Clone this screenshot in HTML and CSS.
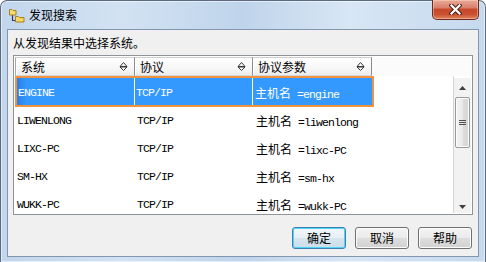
FILE: index.html
```html
<!DOCTYPE html>
<html lang="zh">
<head>
<meta charset="utf-8">
<title>发现搜索</title>
<link rel="stylesheet" href="styles.css">
</head>
<body>
<div class="window">
  <div class="titlebar">
    <svg class="app-icon" width="16" height="15" viewBox="0 0 16 15">
      <path d="M3.5 6.5v6h3.5" stroke="#2c3a6e" stroke-width="1.2" fill="none"/>
      <path d="M0.5 1.5h2.5l1 1h3v4.5h-6.5z" fill="#f6dc6c" stroke="#a8811c"/>
      <path d="M6.5 8.5h3l1 1h4.5v4.5h-8.5z" fill="#f8d865" stroke="#a8811c"/>
    </svg>
    <span class="title">发现搜索</span>
    <div class="close">
      <svg width="13" height="11" viewBox="0 0 13 11">
        <path d="M2.5 1.5l8 8M10.5 1.5l-8 8" stroke="#4b2018" stroke-width="4.2" stroke-linecap="square"/>
        <path d="M2.5 1.5l8 8M10.5 1.5l-8 8" stroke="#ffffff" stroke-width="2.2" stroke-linecap="square"/>
      </svg>
    </div>
  </div>
  <div class="client">
    <div class="prompt">从发现结果中选择系统。</div>
    <div class="listbox">
      <div class="header">
        <div class="hcell c1"><span>系统</span><svg class="sort" width="9" height="11" viewBox="0 0 9 11"><path d="M1 5.5L4.5 1.5 8 5.5zM1 6L4.5 9.5 8 6z" fill="none" stroke="#3a3a3a" stroke-linejoin="round"/></svg></div>
        <div class="hcell c2"><span>协议</span><svg class="sort" width="9" height="11" viewBox="0 0 9 11"><path d="M1 5.5L4.5 1.5 8 5.5zM1 6L4.5 9.5 8 6z" fill="none" stroke="#3a3a3a" stroke-linejoin="round"/></svg></div>
        <div class="hcell c3"><span>协议参数</span><svg class="sort" width="9" height="11" viewBox="0 0 9 11"><path d="M1 5.5L4.5 1.5 8 5.5zM1 6L4.5 9.5 8 6z" fill="none" stroke="#3a3a3a" stroke-linejoin="round"/></svg></div>
        <div class="hfill"></div>
      </div>
      <div class="body">
        <div class="viewport">
          <div class="row sel">
            <div class="cell c1">ENGINE</div>
            <div class="cell c2">TCP/IP</div>
            <div class="cell c3"><span class="zh">主机名</span> =engine</div>
          </div>
          <div class="row">
            <div class="cell c1">LIWENLONG</div>
            <div class="cell c2">TCP/IP</div>
            <div class="cell c3"><span class="zh">主机名</span> =liwenlong</div>
          </div>
          <div class="row">
            <div class="cell c1">LIXC-PC</div>
            <div class="cell c2">TCP/IP</div>
            <div class="cell c3"><span class="zh">主机名</span> =lixc-PC</div>
          </div>
          <div class="row">
            <div class="cell c1">SM-HX</div>
            <div class="cell c2">TCP/IP</div>
            <div class="cell c3"><span class="zh">主机名</span> =sm-hx</div>
          </div>
          <div class="row">
            <div class="cell c1">WUKK-PC</div>
            <div class="cell c2">TCP/IP</div>
            <div class="cell c3"><span class="zh">主机名</span> =wukk-PC</div>
          </div>
        </div>
        <div class="scrollbar">
          <div class="sb-btn up"><svg width="7" height="4" viewBox="0 0 7 4"><path d="M0 4L3.5 0 7 4z" fill="#404040"/></svg></div>
          <div class="thumb"><div class="grip"></div></div>
          <div class="track"></div>
          <div class="sb-btn down"><svg width="7" height="4" viewBox="0 0 7 4"><path d="M0 0L3.5 4 7 0z" fill="#404040"/></svg></div>
        </div>
      </div>
    </div>
    <div class="buttons">
      <div class="btn default">确定</div>
      <div class="btn">取消</div>
      <div class="btn">帮助</div>
    </div>
  </div>
</div>
</body>
</html>
```
FILE: styles.css
```css
* { box-sizing: border-box; margin: 0; padding: 0; }
html, body { width: 486px; height: 262px; overflow: hidden; }
body {
  font-family: "Noto Sans CJK SC", "Noto Sans", sans-serif;
  font-size: 12px;
  color: #000;
  background: #ffffff;
}
.window {
  width: 486px;
  height: 262px;
  border: 1px solid #5b6c82;
  border-bottom: none;
  border-radius: 7px 7px 0 0;
  padding: 0 6px;
  background: linear-gradient(90deg, #c2d6ec 0%, #d2e2f3 25%, #bfd4eb 50%, #d8e6f5 72%, #c6d9ee 100%);
  box-shadow: inset 0 0 0 1px rgba(255,255,255,0.55);
  display: flex;
  flex-direction: column;
}
.titlebar {
  height: 28px;
  display: flex;
  align-items: center;
}
.app-icon { margin-left: 2px; flex: none; }
.title {
  margin-left: 4px;
  font-size: 12px;
  line-height: 14px;
  color: #000;
}
.close {
  margin-left: auto;
  align-self: flex-start;
  margin-top: -1px;
  width: 47px;
  height: 20px;
  border: 1px solid #6e2a1d;
  border-top: none;
  border-radius: 0 0 5px 5px;
  background: linear-gradient(180deg, #e9ab9a 0%, #d9806b 40%, #c7472b 50%, #c9502f 75%, #e0835c 100%);
  box-shadow: inset 0 0 0 1px rgba(255,220,200,0.45);
  display: flex;
  align-items: center;
  justify-content: center;
}
.client {
  height: 228px;
  border: 1px solid #8496ad;
  background: #f0f0f0;
  padding: 6px 5px 7px 5px;
  display: flex;
  flex-direction: column;
}
.prompt {
  font-size: 12px;
  line-height: 14px;
  height: 14px;
}
.listbox {
  margin-top: 5px;
  height: 160px;
  border: 1px solid #8f9499;
  padding: 1px;
  background: #ffffff;
  display: flex;
  flex-direction: column;
}
.header {
  height: 19px;
  display: flex;
  flex: none;
}
.hcell {
  height: 19px;
  display: flex;
  align-items: center;
  justify-content: space-between;
  padding: 0 6px 0 5px;
  border-top: 1px solid #cfcfcf;
  border-bottom: 1px solid #d8d8d8;
  border-right: 1px solid #8c8c8c;
  box-shadow: inset 1px 0 0 #ffffff;
  background: linear-gradient(180deg, #ffffff 0%, #f7f7f7 60%, #ececec 100%);
  font-size: 12px;
  line-height: 14px;
}
.hcell.c1 { width: 120px; border-left: 1px solid #a8a8a8; }
.hcell.c2 { width: 118px; }
.hcell.c3 { width: 119px; }
.sort { flex: none; }
.hfill {
  flex: 1;
  background: #fbfbfb;
}
.body {
  flex: 1;
  display: flex;
  min-height: 0;
}
.viewport {
  flex: 1;
  background: #ffffff;
  border-right: 1px solid #d4d4d4;
  overflow: hidden;
}
.row {
  width: 357px;
  height: 28px;
  display: flex;
  font-family: "Liberation Mono", "Noto Sans CJK SC", monospace;
  font-size: 11.5px;
  letter-spacing: -0.9px;
  line-height: 28px;
  white-space: pre;
}
.row .zh {
  font-family: "Noto Sans CJK SC", sans-serif;
  font-size: 12px;
  letter-spacing: 0;
}
.cell { padding-left: 2px; height: 100%; overflow: hidden; }
.cell.c1 { width: 120px; }
.cell.c2 { width: 118px; }
.cell.c3 { width: 119px; padding-left: 3px; }
.row.sel {
  width: 359px;
  height: 31px;
  border: 2px solid #f0923e;
  background: #3399ff;
  color: #ffffff;
  line-height: 29px;
}
.row.sel .cell {
  height: 27px;
}
.row.sel .cell.c1 {
  width: 118px;
  padding-left: 1px;
  border-right: 1px solid #ffffff;
  background: linear-gradient(90deg, #2a80e6 0px, #3399ff 10px);
}
.row.sel .cell.c2 { border-right: 1px solid #ffffff; padding-left: 1px; }
.row.sel .cell.c3 { padding-left: 2px; }
.scrollbar {
  width: 17px;
  margin-top: 2px;
  background: #f2f2f2;
  display: flex;
  flex-direction: column;
  flex: none;
}
.sb-btn {
  display: flex;
  align-items: center;
  justify-content: center;
  flex: none;
}
.sb-btn.up { height: 19px; }
.sb-btn.down { height: 12px; }
.thumb {
  height: 51px;
  margin: 0 1px;
  border: 1px solid #9b9b9b;
  border-radius: 2px;
  background: linear-gradient(90deg, #f4f4f4 0%, #e9e9e9 50%, #dcdcdc 51%, #d6d6d6 100%);
  box-shadow: inset 0 0 0 1px #fbfbfb;
  display: flex;
  align-items: center;
  justify-content: center;
}
.grip {
  width: 7px;
  height: 6px;
  background: repeating-linear-gradient(180deg, #505050 0, #505050 1px, transparent 1px, transparent 2px);
}
.track { flex: 1; }
.buttons {
  margin-top: 12px;
  margin-right: 1px;
  display: flex;
  justify-content: flex-end;
  gap: 9px;
}
.btn {
  width: 54px;
  height: 22px;
  border: 1px solid #707070;
  border-radius: 3px;
  background: linear-gradient(180deg, #f4f4f4 0%, #ebebeb 48%, #dddddd 52%, #d2d2d2 100%);
  box-shadow: inset 0 0 0 1px #fcfcfc;
  display: flex;
  align-items: center;
  justify-content: center;
  font-size: 12px;
  line-height: 14px;
}
.btn.default {
  border-color: #3c7fb1;
  box-shadow: inset 0 0 0 1px #4fd3f7;
  background: linear-gradient(180deg, #f1f7fb 0%, #e7eff5 48%, #d7e5ee 52%, #cadde9 100%);
}
```
